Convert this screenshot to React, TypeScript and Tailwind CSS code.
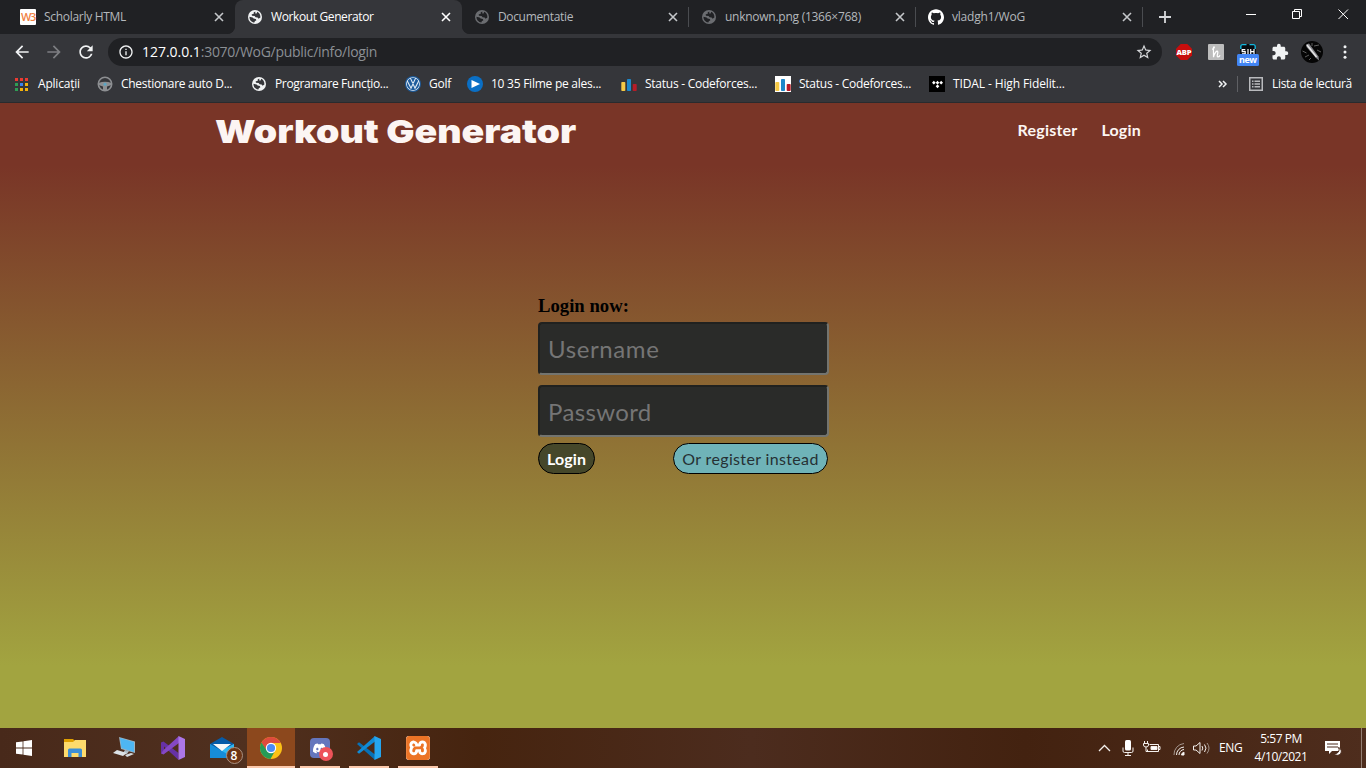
import React from "react";
import type { ReactNode } from "react";
import { SiDiscord, SiXampp, SiTidal, SiVolkswagen, SiGithub } from "react-icons/si";
import { MdExtension, MdArrowBack, MdArrowForward, MdRefresh, MdStarBorder, MdInfoOutline } from "react-icons/md";

const ui = "font-['Open_Sans','Noto_Sans',sans-serif]";

function Globe({ color, cut }: { color: string; cut: string }) {
  return (
    <svg viewBox="0 0 16 16" className="h-4 w-4 shrink-0">
      <circle cx="8" cy="8" r="7" fill={color} />
      <path
        d="M8.3 2.4 6.6 3.6 7 4.6 4.6 5.4 5 6.8 7.6 6.9 8.6 8.3 10.6 8.6 11.6 9.8 13.4 8.6C13.700 5.600 11.900 3.400 10.200 2.800L9.600 4.400 8.300 4.600z"
        fill={cut}
      />
      <path d="M2.500 7.800 5.600 8.600 6.600 9.600 8.800 9.900 9.400 11.200 7.800 12.200 7.400 13.500C4.600 13.300 2.300 10.800 2.500 7.800z" fill={cut} />
    </svg>
  );
}

function CloseX({ bright }: { bright?: boolean }) {
  return (
    <svg viewBox="0 0 16 16" className="h-4 w-4 shrink-0">
      <path d="M4 4l8 8M12 4l-8 8" stroke={bright ? "#ffffff" : "#c4c7ca"} strokeWidth="1.6" />
    </svg>
  );
}

function Tab({ icon, title, spacing, active, sep }: { icon: ReactNode; title: string; spacing: string; active?: boolean; sep?: boolean }) {
  return (
    <div className="flex h-[34px] w-[227px] shrink-0 items-center bg-[#202124]">
      <div className={`flex h-full w-full items-center pl-3 ${active ? "rounded-t-lg bg-[#35363a]" : ""}`}>
        {icon}
        <span className={`ml-2 w-[167px] text-[12px] leading-4 whitespace-nowrap ${spacing} ${active ? "text-white" : "text-[#b4b8bc]"}`}>{title}</span>
        <CloseX bright={active} />
        <span className={`ml-[7px] h-5 w-px ${sep ? "bg-[#4a4c50]" : ""}`} />
      </div>
    </div>
  );
}

function Bookmark({ icon, title, width, spacing }: { icon: ReactNode; title: string; width: string; spacing: string }) {
  return (
    <div className={`flex shrink-0 items-center gap-2 ${width}`}>
      {icon}
      <span className={`whitespace-nowrap ${spacing}`}>{title}</span>
    </div>
  );
}

function Bars({ boxed }: { boxed?: boolean }) {
  return (
    <svg viewBox="0 0 16 16" className="h-4 w-4 shrink-0">
      {boxed && <rect width="16" height="16" fill="#fff" />}
      <rect x="0.3" y="6" width="4" height="9" rx="0.8" fill="#f6c944" />
      <rect x="6" y="3" width="4" height="12" rx="0.8" fill="#1e88c9" />
      <rect x="11.7" y="8" width="4" height="7" rx="0.8" fill="#b71c27" />
    </svg>
  );
}

function BrowserTabs() {
  return (
    <div className="flex h-[34px] bg-[#35363a]">
      <div className="flex overflow-hidden rounded-br-lg bg-[#202124] pl-2">
        <Tab
          icon={
            <span className="flex h-4 w-4 shrink-0 items-center justify-center rounded-[1px] bg-white text-[11px] font-semibold tracking-[-1.4px] text-[#f08040]">
              W3
            </span>
          }
          title="Scholarly HTML"
          spacing="tracking-[-0.3px]"
        />
      </div>
      <Tab active icon={<Globe color="#f1f3f4" cut="#35363a" />} title="Workout Generator" spacing="tracking-[-0.38px]" />
      <div className="flex flex-1 overflow-hidden rounded-bl-lg bg-[#202124]">
        <Tab sep icon={<Globe color="#6b6d71" cut="#202124" />} title="Documentatie" spacing="tracking-[-0.35px]" />
        <Tab sep icon={<Globe color="#6b6d71" cut="#202124" />} title="unknown.png (1366×768)" spacing="tracking-[-0.26px]" />
        <Tab sep icon={<SiGithub className="h-4 w-4 shrink-0 text-white" />} title="vladgh1/WoG" spacing="tracking-[-0.2px]" />
        <div className="flex flex-1 items-start">
          <svg viewBox="0 0 16 16" className="mt-[9px] ml-[14px] h-4 w-4 shrink-0">
            <path d="M8 2v12M2 8h12" stroke="#d5d7da" strokeWidth="1.8" />
          </svg>
          <svg viewBox="0 0 120 30" className="ml-auto h-[30px] w-[120px]" fill="none" stroke="#fff">
            <path d="M0 14.5h10M46.5 11.5h7v7h-7zM48.5 11.5v-2h7v7h-2M92.5 9.5l9.5 9.5M102 9.5l-9.5 9.5" />
          </svg>
        </div>
      </div>
    </div>
  );
}

function Toolbar() {
  return (
    <div className="flex h-9 items-center text-[#f1f3f4]">
      <MdArrowBack className="ml-3 h-5 w-5" />
      <MdArrowForward className="ml-3 h-5 w-5 text-[#7d7e82]" />
      <MdRefresh className="ml-3 h-5 w-5" />
      <div className="ml-3 flex h-7 w-[1054px] items-center rounded-full bg-[#202124]">
        <MdInfoOutline className="ml-[10px] h-4 w-4 shrink-0" />
        <span className="ml-2 text-[14px] leading-5 tracking-[-0.29px] whitespace-nowrap text-[#8b8f94]">
          <span className="tracking-[-0.03px] text-white">127.0.0.1</span>:3070/WoG/public/info/login
        </span>
        <MdStarBorder className="mr-[9px] ml-auto h-[18px] w-[18px] text-[#d5d7da]" />
      </div>
      <svg viewBox="0 0 16 16" className="ml-[14px] h-4 w-4">
        <path d="M4.7 0h6.6L16 4.7v6.6L11.3 16H4.7L0 11.3V4.7z" fill="#c70d0d" />
        <text x="8" y="10.8" textAnchor="middle" fontSize="7.6" fontWeight="800" fontFamily="Open Sans" fill="#fff" textLength="15">ABP</text>
      </svg>
      <svg viewBox="0 0 16 16" className="ml-4 h-4 w-4" fill="none">
        <rect width="16" height="16" rx="1" fill="#bdbdbd" />
        <path d="M4 5.2C6 5 7 3 5.9 2.8 5 2.8 5.6 6 5.5 13.2 6.5 8.5 9.3 5.8 9.8 7.8c.4 1.5-1.5 4.8 0 5 .9.1 1.9-.8 2.2-1.6" stroke="#fff" strokeWidth="1.2" />
      </svg>
      <svg viewBox="0 0 22 24" className="mt-1 ml-[13px] h-6 w-[22px]">
        <rect x="3" y="2" width="16" height="12" rx="2" fill="#080c10" />
        <path d="M3.800 7V4Q3.800 2.600 5.500 2.600H9.500M12.500 2.600h4Q18.200 2.600 18.200 4V7" fill="none" stroke="#16b7dd" strokeWidth="1.400" />
        <path
          d="M8.300 7.600H5.200v2h3v2.200H5M11 7v5M13.700 7v5M17 7v5M13.700 9.600H17"
          fill="none"
          stroke="#fff"
          strokeWidth="1.200"
        />
        <rect x="0" y="12" width="22" height="12" rx="1.5" fill="#4285f4" />
        <text x="11" y="21" textAnchor="middle" fontSize="9" fontWeight="700" fontFamily="Open Sans" fill="#fff" textLength="18">new</text>
      </svg>
      <MdExtension className="ml-[12px] h-[18px] w-[18px]" />
      <svg viewBox="0 0 22 22" className="ml-[12px] h-[22px] w-[22px]">
        <circle cx="11" cy="11" r="11" fill="#050505" />
        <path d="M5 3.500l3-1 9.500 13 .5 4-3-2.500L5.500 6z" fill="#85858a" />
        <path d="M6 4l9.500 12" stroke="#e8e8e8" strokeWidth="1.500" />
        <path d="M1.500 10l4 2M13 5l5-1M4 16l4-2M16 9l4 2M8 19l2-2M11 2v3" stroke="#5d5d5d" />
      </svg>
      <svg viewBox="0 0 4 16" className="ml-[20px] h-4 w-1" fill="#f1f3f4">
        <circle cx="2" cy="2.700" r="1.500" />
        <circle cx="2" cy="8" r="1.500" />
        <circle cx="2" cy="13.300" r="1.500" />
      </svg>
    </div>
  );
}

function BookmarksBar() {
  return (
    <div className="flex h-7 items-center text-[12px] leading-4 text-white">
      <svg viewBox="0 0 13 13" className="ml-[15px] h-[13px] w-[13px]">
        <path d="M0 0h3v3H0zM5 0h3v3H5zM10 0h3v3h-3z" fill="#ec3b32" />
        <path d="M0 5h3v3H0z" fill="#2f9e55" />
        <path d="M5 5h3v3H5z" fill="#3b82f0" />
        <path d="M10 5h3v3h-3zM5 10h3v3H5zM10 10h3v3h-3z" fill="#f4b30c" />
        <path d="M0 10h3v3H0z" fill="#2f9e55" />
      </svg>
      <span className="ml-[10px] w-[59px] tracking-[-0.2px]">Aplicații</span>
      <Bookmark
        width="w-[154px]"
        spacing="tracking-[-0.3px]"
        title="Chestionare auto D..."
        icon={
          <svg viewBox="0 0 16 16" className="h-4 w-4 shrink-0">
            <circle cx="8" cy="8" r="6.700" fill="none" stroke="#8d8f92" strokeWidth="1.600" />
            <path d="M1.500 7Q8 4.500 14.500 7V9L10 10.500V14H6V10.500L1.500 9z" fill="#8d8f92" />
            <circle cx="8" cy="8.300" r="1.500" fill="#5aa5c4" />
          </svg>
        }
      />
      <Bookmark width="w-[154px]" spacing="tracking-[-0.35px]" title="Programare Funcțio..." icon={<Globe color="#f1f3f4" cut="#35363a" />} />
      <Bookmark
        width="w-[62px]"
        spacing="tracking-[-0.25px]"
        title="Golf"
        icon={<SiVolkswagen className="h-4 w-4 shrink-0 rounded-full bg-[#1e5c9c] p-px text-[#e1eaf3]" />}
      />
      <Bookmark
        width="w-[154px]"
        spacing="tracking-[-0.25px]"
        title="10 35 Filme pe ales..."
        icon={
          <svg viewBox="0 0 16 16" className="h-4 w-4 shrink-0">
            <circle cx="8" cy="8" r="8" fill="#0a6fc5" />
            <path d="M4.500 4l8.500 4-8.500 4z" fill="#fff" />
          </svg>
        }
      />
      <Bookmark width="w-[154px]" spacing="tracking-[-0.25px]" title="Status - Codeforces..." icon={<Bars />} />
      <Bookmark width="w-[154px]" spacing="tracking-[-0.25px]" title="Status - Codeforces..." icon={<Bars boxed />} />
      <Bookmark
        width="w-[154px]"
        spacing="tracking-[-0.12px]"
        title="TIDAL - High Fidelit..."
        icon={
          <span className="flex h-4 w-4 shrink-0 items-center justify-center bg-black">
            <SiTidal className="h-[11px] w-[11px] text-white" />
          </span>
        }
      />
      <svg viewBox="0 0 10 8" className="ml-[135px] h-2 w-[10px]" fill="none" stroke="#f1f3f4" strokeWidth="1.500">
        <path d="M1 1l3 3-3 3M5 1l3 3-3 3" />
      </svg>
      <span className="ml-[9px] h-4 w-px bg-[#5f6064]" />
      <svg viewBox="0 0 14 14" className="ml-[11px] h-[14px] w-[14px]" fill="none" stroke="#b9babd" strokeWidth="1.500">
        <rect x="0.750" y="0.750" width="12.500" height="12.500" />
        <path d="M3 4.200h1.500M5.500 4.200H11M3 7h1.500M5.500 7H11M3 9.800h1.500M5.500 9.800H11" />
      </svg>
      <span className="ml-[9px] tracking-[-0.32px] whitespace-nowrap">Lista de lectură</span>
    </div>
  );
}

function Page() {
  const field =
    "block w-[291px] rounded-[4px] border-2 border-t-[#20211f] border-l-[#20211f] border-r-[#73746f] border-b-[#73746f] bg-[#2a2b29] px-2 text-[24px] placeholder:text-[#757575] placeholder:opacity-100 outline-none";
  return (
    <main className="h-[625px] bg-[linear-gradient(to_bottom,#793527_10%,#a2a440_90%)] font-[Lato,sans-serif]">
      <header className="flex h-[57px] items-center pr-[225px] pl-[215px]">
        <h1 className="w-[360px] origin-left scale-x-[1.172] font-[Inter,sans-serif] text-[32px] leading-[57px] font-black whitespace-nowrap text-[#fcf5f3]">
          Workout Generator
        </h1>
        <nav className="ml-auto flex gap-[24px] pb-1 text-[16px] leading-6 font-bold tracking-[0.2px] text-[#fcf5f3]">
          <a>Register</a>
          <a>Login</a>
        </nav>
      </header>
      <form className="mt-[132px] ml-[538px] w-[291px]">
        <h3 className="h-[30px] pt-[3px] font-['Liberation_Serif',serif] text-[18.7px] leading-[22px] font-bold text-black">Login now:</h3>
        <input className={`${field} h-[53px] tracking-[0.6px]`} placeholder="Username" />
        <input className={`${field} mt-[10px] h-[52px] tracking-[0.35px]`} placeholder="Password" type="password" />
        <div className="mt-[6px] flex w-[290px] justify-between">
          <button type="button" className="h-[31px] w-[57px] rounded-full border border-black bg-[#45472a] text-[16px] font-bold tracking-[0.1px] text-white">
            Login
          </button>
          <button
            type="button"
            className="h-[31px] w-[155px] rounded-full border border-black bg-[#6fb3b8] text-[16px] tracking-[0.35px] whitespace-nowrap text-[#263033]"
          >
            Or register instead
          </button>
        </div>
      </form>
    </main>
  );
}

function TaskItem({ children, open }: { children: ReactNode; open?: boolean }) {
  return (
    <div className="flex h-10 w-[49px] shrink-0 flex-col items-center">
      <div className="flex h-[38px] items-center pt-0.5">{children}</div>
      {open && <div className="h-0.5 w-10 bg-[#fcc9ac]" />}
    </div>
  );
}

function Taskbar() {
  return (
    <footer className="flex h-10 items-stretch bg-[linear-gradient(to_right,#48291a,#50301f_18%,#46240f_35%,#4c2c1e_55%,#432210_75%,#4e2d1d)] text-white">
      <div className="flex w-[50px] items-center pl-4">
        <svg viewBox="0 0 16 16" className="h-4 w-4" fill="#fff">
          <path d="M0 2.300L6.600 1.400V7.600H0zM7.400 1.300L16 0V7.600H7.400zM0 8.400h6.600v6.200L0 13.700zM7.400 8.400H16V16l-8.600-1.200z" />
        </svg>
      </div>
      <TaskItem>
        <svg viewBox="0 0 22 20" className="h-5 w-[22px]">
          <path d="M0 1h9l2 2v3H0z" fill="#e0a000" />
          <path d="M0 4h9l2-2h11v17H0z" fill="#fddb6d" />
          <path d="M4 19v-7q0-1.500 1.500-1.500h11q1.500 0 1.500 1.500v7h-3.500v-4h-7v4z" fill="#3c8fd6" />
        </svg>
      </TaskItem>
      <TaskItem>
        <svg viewBox="0 0 24 24" className="h-6 w-6">
          <path d="M7 1l16 4.500V17L9 13z" fill="#9db2bf" />
          <path d="M8 2l14 4v10L9.500 12z" fill="#4eb6f3" />
          <path d="M13 14l4 1-2 3-4-1z" fill="#aebbc4" />
          <path d="M5 14l10 3-4 3L1 17z" fill="#dce2e6" />
          <path d="M13 19l6-2 3 1-7 3z" fill="#d4dade" />
        </svg>
      </TaskItem>
      <TaskItem>
        <svg viewBox="0 0 24 24" className="h-6 w-6">
          <path d="M0 6.500L2.500 5.500 17.500 17V24L3 10.500V15L0 17.500z" fill="#6631a5" />
          <path d="M0 17.500l2.500 1L18 7V0L3 13.500z" fill="#8548c4" />
          <path d="M17.500 0L24 3v18l-6.500 3z" fill="#ac76e7" />
        </svg>
      </TaskItem>
      <TaskItem>
        <div className="relative">
          <svg viewBox="0 0 24 24" className="h-6 w-6">
            <path d="M0 8L12 1l12 7-12 9z" fill="#075ba7" />
            <path d="M0 8l12 8.500L24 8v14H0z" fill="#1996df" />
            <path d="M0 22l12-8L24 8v14z" fill="#2eb8f4" />
            <path d="M0 8l24 14H0z" fill="#168cd8" />
            <path d="M3 8h18l-9 7z" fill="#f8f8f8" />
          </svg>
          <span className="absolute top-[11px] left-[16px] flex h-[17px] w-[17px] items-center justify-center rounded-full border border-[#aa9182] bg-[#6b3415] text-[12px] leading-none font-semibold">
            8
          </span>
        </div>
      </TaskItem>
      <div className="ml-px flex w-12 items-center justify-center border-b-2 border-[#fcc9ac] bg-[#8c481d] pt-0.5">
        <svg viewBox="0 0 24 24" className="h-6 w-6">
          <circle cx="12" cy="12" r="11" fill="#fbc116" />
          <path d="M2.400 6.600A11 11 0 0 1 21.600 6.600L21.600 7H12l-5 7z" fill="#dd4b3e" />
          <path d="M2.400 6.600A11 11 0 0 0 11.500 23l5-9-9 0z" fill="#259b57" />
          <circle cx="12" cy="12" r="5.200" fill="#fff" />
          <circle cx="12" cy="12" r="4.100" fill="#4b8bf5" />
        </svg>
      </div>
      <TaskItem open>
        <div className="relative">
          <span className="flex h-5 w-5 items-center justify-center rounded-[4px] bg-[#6476bd]">
            <SiDiscord className="h-[13px] w-[13px] text-white" />
          </span>
          <span className="absolute top-[9px] left-[9px] flex h-[14px] w-[14px] items-center justify-center rounded-full bg-[#ee5359]">
            <span className="h-[5px] w-[5px] rounded-full bg-white" />
          </span>
        </div>
      </TaskItem>
      <TaskItem open>
        <svg viewBox="0 0 24 24" className="h-6 w-6">
          <path d="M0 8l2-1.800 16 12.300V24z" fill="#0871b5" />
          <path d="M0 16l2 1.800L18 5.500V0z" fill="#118bd5" />
          <path d="M17.500 0L24 3v18l-6.500 3z" fill="#25a5ed" />
        </svg>
      </TaskItem>
      <TaskItem open>
        <SiXampp className="h-6 w-6 rounded-[3px] bg-white text-[#ec7426]" />
      </TaskItem>
      <div className="ml-auto flex items-center">
        <svg viewBox="0 0 112 20" className="mr-[9px] h-5 w-[112px]" fill="none" stroke="#f4f0ed">
          <path d="M1 13l5.500-5.500L12 13" strokeWidth="1.300" />
          <rect x="27" y="2" width="6" height="10.500" rx="1.500" fill="#fff" stroke="none" />
          <path d="M25 9.500v3.500q0 1.500 1.500 1.500h7q1.500 0 1.500-1.500V9.500M30 15v2.500M27 17.500h6" />
          <path d="M51.500 6.500h9v7h-11v-2M60.500 8.500h1.500v3h-1.500" />
          <path d="M53 8.500h6v3h-6z" fill="#fff" />
          <path d="M46.500 3v2M49.500 3v2M45.500 5.500h5v1.500q0 2-2.500 2t-2.500-2zM48 9v4.500h2" />
          <path d="M76 17a11 11 0 0 1 10-11.500" stroke="#a4958d" />
          <path d="M78.500 17a8 8 0 0 1 7.500-8M81 17a5.500 5.500 0 0 1 5-5.500" />
          <path d="M83.500 17a3 3 0 0 1 2.500-2.800V17z" fill="#fff" />
          <path d="M95.500 8h2.500l4-3.500v11L98 12h-2.500z" />
          <path d="M104 8q1.500 2 0 4.500M106.500 6.500q3 3.500 0 7.500" />
          <path d="M109 5q4 5 0 10.500" stroke="#a4958d" />
        </svg>
        <span className="w-[34px] text-[12px] tracking-[-0.3px]">ENG</span>
        <div className="w-[56px] text-center text-[12px] leading-[18px] tracking-[-0.45px] whitespace-nowrap">
          <div>5:57 PM</div>
          <div>4/10/2021</div>
        </div>
        <svg viewBox="0 0 18 18" className="mr-[19px] ml-[15px] h-[18px] w-[18px]">
          <path d="M1 2h15v10H8l-3 3v-3H1z" fill="#fff" />
          <path d="M3 5h11M3 8h11" stroke="#4a291a" />
          <path d="M14.500 8.500a4 4 0 1 1-4.500 6 4 4 0 0 0 4.500-6z" fill="#fff" stroke="#4a291a" />
        </svg>
        <span className="mr-1 h-10 w-px bg-[#937e72]" />
      </div>
    </footer>
  );
}

export default function App() {
  return (
    <div className="h-[773px] w-[1370px] overflow-hidden bg-white">
      <div className={`flex h-[768px] w-[1366px] flex-col overflow-hidden bg-[#35363a] ${ui}`}>
        <BrowserTabs />
        <Toolbar />
        <div className="h-[33px] border-b border-[#292b2e]">
          <BookmarksBar />
        </div>
        <Page />
        <Taskbar />
      </div>
    </div>
  );
}
